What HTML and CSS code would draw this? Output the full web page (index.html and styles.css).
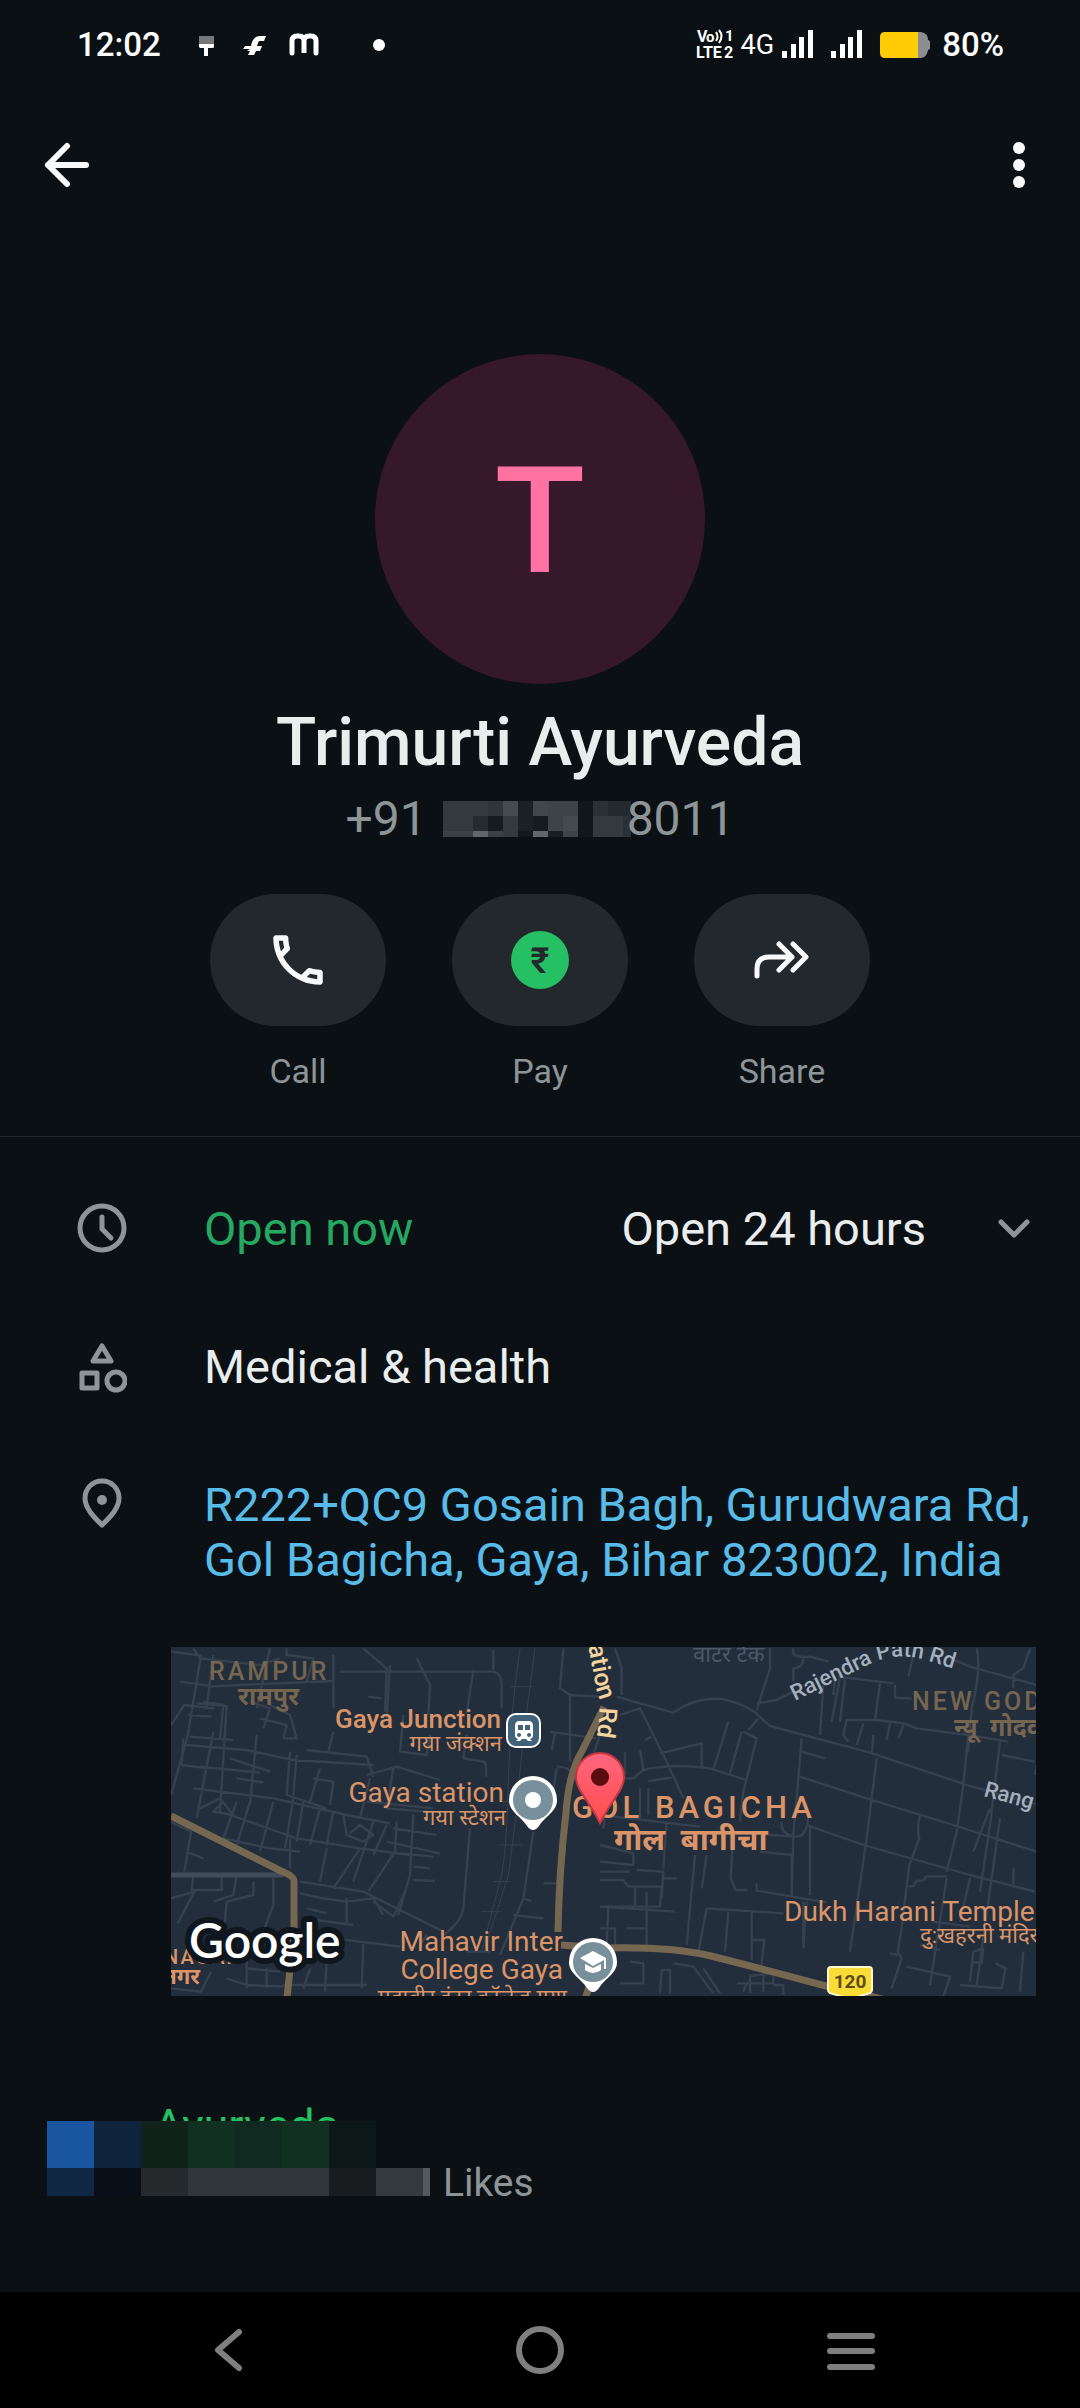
FILE: index.html
```html
<!DOCTYPE html>
<html lang="en">
<head>
<meta charset="utf-8">
<meta name="viewport" content="width=device-width, initial-scale=1">
<title>Trimurti Ayurveda</title>
<link rel="stylesheet" href="styles.css">
</head>
<body>
<div class="statusbar">
  <span class="clock">12:02</span>
  <svg class="notifications" width="188" height="28" viewBox="0 0 188 28" aria-hidden="true">
    <path fill="#75787a" d="M0 5h15v9H0z"/>
    <path fill="#fff" d="M0 13h15v3l-1 1H9v8H5v-8H1l-1-1z"/>
    <path fill="#fff" d="M46 15h6c1-6 4-10 9-10h6l-2 5h-4c-2 0-2 2-3 5h5l-2 5h-4l-2 4h-6l2-4h-3l3-2h-7z"/>
    <path fill="none" stroke="#fff" stroke-width="5" stroke-linecap="round" d="M93 22V10q0-5 5-5h2q5 0 5 5v12V10q0-5 5-5h2q5 0 5 5v12"/>
    <circle cx="180" cy="14" r="6" fill="#fff"/>
  </svg>
  <span class="spacer"></span>
  <svg class="volte" width="38" height="32" viewBox="0 0 38 32" role="img" aria-label="VoLTE">
    <g fill="#fff" font-weight="700">
      <text x="1" y="15" font-size="16">V</text><text x="10" y="15" font-size="15">o</text>
      <text x="29" y="14" font-size="15">1</text>
      <text x="0" y="31" font-size="16">LTE</text><text x="28" y="31" font-size="16">2</text>
    </g>
    <path fill="none" stroke="#fff" stroke-width="2" d="M20 5q3 5 0 9M23 3q5 6 0 13"/>
  </svg>
  <span class="network">4G</span>
  <svg class="signal" width="32" height="28" viewBox="0 0 32 28" aria-hidden="true"><path fill="#fff" d="M0 21h5v7H0zM9 14h5v14H9zM17 7h5v21h-5zM26 0h5v28h-5z"/></svg>
  <svg class="signal" width="32" height="28" viewBox="0 0 32 28" aria-hidden="true"><path fill="#fff" d="M0 21h5v7H0zM9 14h5v14H9zM17 7h5v21h-5zM26 0h5v28h-5z"/></svg>
  <svg class="battery" width="50" height="26" viewBox="0 0 50 26" aria-hidden="true">
    <path fill="#8c8d90" d="M36 0h5q7 1 7 8l2 1v8l-2 1q-1 7-7 8h-5z"/>
    <path fill="#ffcc05" d="M5 0h33v26H5q-5 0-5-5V5q0-5 5-5z"/>
  </svg>
  <span class="charge">80%</span>
</div>

<header class="appbar">
  <button class="icon-button" type="button" aria-label="Back">
    <svg width="50" height="50" viewBox="0 0 50 50" fill="none" stroke="#f7f9fa" stroke-width="6" stroke-linecap="round" stroke-linejoin="round"><path d="M25 6 6 25l19 19M6 25h38"/></svg>
  </button>
  <button class="icon-button" type="button" aria-label="More options">
    <svg width="50" height="50" viewBox="0 0 50 50" fill="#f7f9fa"><circle cx="25" cy="8" r="6"/><circle cx="25" cy="25" r="6"/><circle cx="25" cy="42" r="6"/></svg>
  </button>
</header>

<main>
  <section class="profile">
    <div class="avatar">T</div>
    <h1 class="name">Trimurti Ayurveda</h1>
    <p class="phone">
      <span>+91</span>
      <svg class="phone-mask" width="188" height="36" viewBox="0 0 188 36" shape-rendering="crispEdges" aria-hidden="true">
        <path fill="#33393c" d="M0 0h188v36H0z"/>
        <path fill="#2f363a" d="M45 0h15v15H45z"/><path fill="#454c50" d="M60 0h15v15H60z"/>
        <path fill="#1a2023" d="M75 0h15v30H75z"/><path fill="#40474a" d="M90 0h15v15H90z"/>
        <path fill="#3d4447" d="M105 0h30v36h-30z"/><path fill="#10171a" d="M135 0h15v36h-15z"/>
        <path fill="#2a3033" d="M150 0h15v15h-15z"/><path fill="#23292c" d="M165 0h23v15h-23z"/>
        <path fill="#252c2f" d="M30 15h15v15H30z"/><path fill="#151c1f" d="M45 15h15v15H45zM90 15h15v15H90z"/>
        <path fill="#444b4f" d="M120 15h15v15h-15z"/><path fill="#60676a" d="M30 30h15v6H30zM90 30h15v6H90z"/>
        <path fill="#3a4144" d="M0 30h30v6H0zM45 30h15v6H45z"/><path fill="#11181b" d="M75 30h15v6H75z"/>
        <path fill="#171f22" d="M105 30h15v6h-15z"/><path fill="#2b3134" d="M180 15h8v21h-8z"/>
      </svg>
      <span class="phone-end">8011</span>
    </p>
    <div class="actions">
      <button class="action" type="button">
        <span class="pill"><svg width="66" height="66" viewBox="0 0 24 24" fill="#f7f9fa"><path d="M6.54 5c.06.89.21 1.76.45 2.59l-1.2 1.2c-.41-1.2-.67-2.47-.76-3.79h1.51m9.86 12.02c.85.24 1.72.39 2.6.45v1.49c-1.32-.09-2.59-.35-3.8-.75l1.2-1.19M7.5 3H4c-.55 0-1 .45-1 1 0 9.39 7.61 17 17 17 .55 0 1-.45 1-1v-3.49c0-.55-.45-1-1-1-1.24 0-2.45-.2-3.57-.57-.1-.04-.21-.05-.31-.05-.26 0-.51.1-.71.29l-2.2 2.2c-2.83-1.45-5.15-3.76-6.59-6.59l2.2-2.2c.28-.28.36-.67.25-1.02C8.7 6.45 8.5 5.25 8.5 4c0-.55-.45-1-1-1z"/></svg></span>
        <span>Call</span>
      </button>
      <button class="action" type="button">
        <span class="pill"><svg width="66" height="66" viewBox="0 0 66 66"><circle cx="33" cy="33" r="29" fill="#25c063"/><text x="33" y="46" text-anchor="middle" font-size="36" font-weight="600" fill="#23282c">₹</text></svg></span>
        <span>Pay</span>
      </button>
      <button class="action" type="button">
        <span class="pill"><svg width="66" height="66" viewBox="0 0 66 66" fill="none" stroke="#f7f9fa" stroke-width="5" stroke-linecap="round" stroke-linejoin="round"><path d="M8 49v-7q0-12 12-12h23M30 17l13 13-13 13M44 17l13 13-13 13"/></svg></span>
        <span>Share</span>
      </button>
    </div>
  </section>

  <section class="details">
    <div class="row">
      <svg class="row-icon" width="50" height="55" viewBox="0 0 50 55" fill="none" stroke="#8d9598" stroke-width="5" stroke-linecap="round" stroke-linejoin="round"><circle cx="25" cy="27" r="22"/><path d="M25 16v12l9 9"/></svg>
      <span class="open">Open now</span>
      <button class="hours" type="button" aria-expanded="false">Open 24 hours
        <svg width="44" height="44" viewBox="0 0 44 44" fill="none" stroke="#8d9598" stroke-width="5" stroke-linecap="round" stroke-linejoin="round"><path d="m9 15 13 13 13-13"/></svg>
      </button>
    </div>
    <div class="row">
      <svg class="row-icon" width="50" height="55" viewBox="0 0 50 55" fill="none" stroke="#8d9598" stroke-width="5" stroke-linejoin="round"><path d="M25 7l9 15H16zM5 34h15v15H5z"/><circle cx="39" cy="42" r="9"/></svg>
      <span>Medical &amp; health</span>
    </div>
    <div class="row">
      <svg class="row-icon" width="50" height="55" viewBox="0 0 50 55" fill="none" stroke="#8d9598" stroke-width="5" stroke-linejoin="round"><path d="M25 4c10 0 17 8 17 17 0 11-10 20-17 27C18 41 8 32 8 21 8 12 15 4 25 4z"/><circle cx="25" cy="23" r="5" fill="#8d9598" stroke="none"/></svg>
      <a class="address" href="#map">R222+QC9 Gosain Bagh, Gurudwara Rd,<br>Gol Bagicha, Gaya, Bihar 823002, India</a>
    </div>
  </section>

  <a class="map" id="map" href="#map" aria-label="Map of Gol Bagicha">
  <svg viewBox="0 0 865 349">
    <defs>
      <linearGradient id="pin" x1="0" y1="0" x2="0" y2="1"><stop offset="0" stop-color="#ff6680"/><stop offset="1" stop-color="#ff4d4d"/></linearGradient>
      <path id="station-rd" d="M413-24 426 45Q432 58 424 100"/>
      <path id="rajendra-rd" d="M624 54 697 18Q722 5 751 12L790 24"/>
    </defs>
    <path fill="#232e3c" d="M0 0h865v349H0z"/>
    <!-- western side streets -->
    <g transform="translate(-11 -12) scale(.333333)" fill="none" stroke="#36414f" stroke-width="7" stroke-linejoin="round">
      <path d="M33 50l90 12-40 240-50 180M100 40l20 30 180 20 60-20M160 60l-20 160M330 40l-40 180M60 140l100 14 120-6 240-10M380 40v20l80 10-20 70M33 270l40-60 90 10M90 305l130 10M70 310l-5 80 80 10M130 200l60 10-10 100M110 205l90 8M85 240l70 5M160 290l-50 260M80 330l180 15 140 30 240 15M200 210l-20 320M270 200l60 20-20 60M300 250l80 20-10 40M330 210l60 30 20 70h-40M120 395l180 18M210 370l120 40M230 430l80 12M290 300l-20 210M390 350l-10 130 120 40M410 360l-10 120M440 345l180 20 20 60M520 290l-15 60M480 400l-30 100M460 430l60 10-10 70M100 460l240 30 220 50 130 25M120 520l60-30 40 50-60-10 30-30M230 500l-40 110M270 500l-40 130M340 500l-40 150M400 490l-25 150M430 500l-20 120M480 520l-30 110M520 530l-20 100M550 540l10 60 50 20 30-20-40-30-30 25M210 540l200 70 190 30 150 20M190 610l140 30 90 10M390 610v90M500 640l-20 100M600 640l-80 120M640 560l-60 180M680 570l-40 90M710 560l-5 90-80 120M760 540l-10 180-35 120M620 420l90-25 130 40M630 430l-30 120M700 400l-20 120 120 10M620 500l200 20M700 580l130 20M680 620l160 35M720 655l100 10M760 695l50 5M760 735l65 3M33 720h370M100 720l-5 45h90v-45M33 560l60 30-20 120M80 650l50 20M230 720l-10 60-60 20M340 730v80l-30 80M280 740v40l-80 20-10 110M420 740l190 30 240 120M420 775l70 15 70 10 80-10 30 50M440 820l60 15M430 850l150 20M560 790v80M640 800l60 45 35-75M33 790l70-20-50 95M33 1060l90 10 30-60M260 880v180M200 1030l60 20 110 5M450 1000l-20 60M500 980l-5 90M610 920l-5 140M520 910l200 25M320 1000v60M370 1050h250M260 1000l100 10"/>
      <path d="M520 60v160M540 110h460q25 5 25 40v70M610 40l70 60-5 130M690 90l-10 160M770 70l40 80-5 90M940 105l-20 130M1000 45v60M625 185l40 5M730 240l-10 110 80 10 10-60M920 300l-10 70 60 10q10 0 8 45M930 580l-20 240q-5 40-60 80M1120 590l-30 200-70 170M1150 745h45M1090 790l25 8M1210 40l-10 120 30 20 90 5M1230 180v200M1170 290l140 20M1185 295l-10 50M1190 400l-20 130M1190 395q50 0 50 40M1320 300l-40 120M1060 840l90 10M920 950h70M800 900l-20 30"/>
      <path stroke-width="3" d="M1080 40q-30 200-35 400t-20 280l-60 230M1125 40q-40 300-50 420t-30 260l-70 220M1050 155h70M1045 255h70M1020 500h70M1020 630h70M1000 740h50M965 830h60"/>
    </g>
    <!-- eastern side streets -->
    <g transform="translate(429 -12) scale(.333333)" fill="none" stroke="#36414f" stroke-width="7" stroke-linejoin="round">
      <path d="M50 185l70 20 100 28q70-50 150-40 50 10 90 35l50 45 300 80 300 100 200 55M510 40v60l-40 125M470 205l60-10 50-25M45 40l20 60v80M580 40q-10 30 50 25l55 15M610 70q0 30-30 30v40M940 60l-15 65M1050 70l60 25 200 55M1130 40q15 60-15 180l-10 130M1290 40l-20 60-30 20v40M60 240l60-20 80 160 50 110M135 315l20-10M180 355l125-30v75M120 345l10 60-30 25H70M130 405q80-20 200-5l110 35M145 438l70-10M385 260l-45 145M425 290l-35 125M430 290l40 20-40 160-10 90M445 285l30-35M605 310l-10 120-15 170-5 180M605 350l70 20M600 425l200 65 260 80 250 80M830 370l-30 240-50 340M820 300l-5 60M960 540q-10 40-2 70l-30 80-25 200-10 60 12 20-30 90M620 570l170 60 320 90 195 50M630 570v210M545 560q-5 40 45 45 30 0 35-60M580 605l-130-10M480 650l95 10v120M400 590l-8 140 15 35h35M470 745v22l210 35M1090 450l-20 140-30 120M1105 300l-15 150M1200 320l-30 250-30 200M1170 520l-50 130M1205 360l100 20M1200 550l-70 500M920 755l20-2 10-15 20-2 10-12h60M1040 730l-50 320M1240 700v60M1110 730l-30 130M1310 390l-5 30M720 130l-25 130M715 125l165 20M700 180l5-50M735 130l-15 130M840 145l-15 110M885 150v38l50 3M830 255h-90l-10 45 15 20M790 265l-20 65M870 265l-10 50M910 270l-15 40M830 255l80 10 40 15 155 20 120 20M670 150l-10 150"/>
      <path d="M0 630l100 25v35l-100-10M0 710h90M0 735h70l15 20h100l-5 60H0M110 705l80 5-5 80M190 730h40M105 760v50M140 770v180M0 815l225 15M25 820l-5 110M0 880h45v50M80 880h55M285 660l-25 270M320 660l-15 100M320 820l230 15M320 820l-25 130M385 830l-10 120M455 830v85h38l-10 90M455 915v60M610 800v140M620 800l-10 140M200 560l-10 140M20 460l-10 120M75 350v70M120 460v90M145 460v80M0 540l300 35M90 980l40 5v60H60M220 985l60 10 60 80M310 1000l50 75M180 1075l5-70h25v70M410 1045h110v-30l-70 8v50M490 1010v60M440 1045l-10 25M520 1050h30v30M920 995l130 30-20 60M1080 1050l125 10 12-60-30-15M1110 1040l10-90 30-10-5 45-30-5M870 955l25 5M960 930l60 15M1000 860l110 15M1270 950l-10 120"/>
    </g>
    <g fill="none" stroke="#766850" stroke-width="7" stroke-linejoin="round">
      <path stroke="#414c59" stroke-width="5" d="M0 228h112"/>
      <path d="M0 169l110 55q13 5 13 10v50l-7 67M433 60 411 104Q398 125 395 165q-7 60-8 120M390 298l40 3q70-2 110 8t115 30q40 8 80 20M418 340l-4 12"/>
    </g>
    <g class="map-area" fill="#766650">
      <text x="38" y="33">RAMPUR</text><text x="741" y="63">NEW GOD</text>
    </g>
    <g class="map-area-hindi" fill="#766650">
      <text x="67" y="58">रामपुर</text><text x="783" y="89">न्यू&#160; गोदव</text>
    </g>
    <text class="map-hindi" x="522" y="15" fill="#4d5866">वॉटर टैंक</text>
    <g fill="#db9468">
      <text class="map-place map-medium" x="330" y="81" text-anchor="end">Gaya Junction</text>
      <text class="map-hindi" x="331" y="104" text-anchor="end">गया जंक्शन</text>
      <text class="map-place" x="333" y="155" text-anchor="end">Gaya station</text>
      <text class="map-hindi" x="335" y="178" text-anchor="end">गया स्टेशन</text>
      <text class="map-district" x="401" y="171">GOL BAGICHA</text>
      <text class="map-district-hindi" x="443" y="203">गोल&#160; बागीचा</text>
      <text class="map-place" x="392" y="304" text-anchor="end">Mahavir Inter</text>
      <text class="map-place" x="392" y="332" text-anchor="end">College Gaya</text>
      <text class="map-hindi" x="396" y="358" text-anchor="end">महावीर इंटर कॉलेज गया</text>
      <text class="map-place" x="613" y="274">Dukh Harani Temple</text>
      <text class="map-hindi" x="749" y="296">दु:खहरनी मंदिर</text>
      <text class="map-town" x="70" y="317" text-anchor="end">NAGAR</text>
      <text class="map-hindi map-bold" x="29" y="337" text-anchor="end">नगर</text>
    </g>
    <text class="map-road map-station" fill="#f5d39c"><textPath href="#station-rd">Station Rd</textPath></text>
    <g class="map-road" fill="#a4b0bd">
      <text><textPath href="#rajendra-rd">Rajendra Path Rd</textPath></text>
      <text x="812" y="149" transform="rotate(15 812 149)">Rang</text>
    </g>
    <rect x="336" y="67" width="33" height="33" rx="9" fill="#42617a" stroke="#fff" stroke-width="2"/>
    <path fill="#fff" fill-rule="evenodd" d="M347 74h12q3 1 3 5v10q0 2-3 3l2 2h-4l-2-2h-4l-2 2h-4l2-2q-3-1-3-3V79q0-4 3-5zm0 4v5h5v-5zm7 0v5h5v-5zm-6 8a2 2 0 1 0 .1 0zm10 0a2 2 0 1 0 .1 0z"/>
    <path fill="#fff" d="M362 129a24 24 0 0 1 24 24c0 12-12 16-18 26q-6 8-12 0c-6-10-18-14-18-26a24 24 0 0 1 24-24z"/>
    <circle cx="362" cy="153" r="20" fill="#78909c"/><circle cx="362" cy="153" r="8" fill="#fff"/>
    <path fill="#fff" d="M422 291a24 24 0 0 1 24 24c0 12-12 16-18 26q-6 8-12 0c-6-10-18-14-18-26a24 24 0 0 1 24-24z"/>
    <circle cx="422" cy="315" r="20" fill="#78909c"/>
    <path fill="#fff" d="M409 311l13-7 13 7v11h-2v-9l-11 6zM414 317l8 4 8-4v6q-8 6-16 0z"/>
    <path fill="url(#pin)" stroke="#c4373f" stroke-width="2" d="M429 106a24 24 0 0 1 24 24c0 13-12 22-24 46-12-24-24-33-24-46a24 24 0 0 1 24-24z"/>
    <circle cx="429" cy="130" r="9" fill="#590d10"/>
    <path fill="#fbdb35" stroke="#fff6cf" stroke-width="2" d="M660 320h38q3 0 3 3v20q0 2-2 3l-20 6-20-6q-2-1-2-3v-20q0-3 3-3z"/>
    <text x="679" y="341" text-anchor="middle" class="map-shield" fill="#5c4b1b">120</text>
    <text x="18" y="311" class="map-logo">Google</text>
  </svg>
  </a>

  <section class="listing">
    <a class="listing-title" href="#map">Ayurveda</a>
    <p class="listing-meta">Likes</p>
    <svg class="listing-mask" width="383" height="75" viewBox="0 0 383 75" shape-rendering="crispEdges" aria-hidden="true">
      <path fill="#1a56a0" d="M0 0h47v47H0z"/><path fill="#10233d" d="M47 0h47v47H47z"/>
      <path fill="#10231b" d="M94 0h47v47H94z"/><path fill="#123022" d="M141 0h47v47h-47zM235 0h47v47h-47z"/>
      <path fill="#112a21" d="M188 0h47v47h-47z"/><path fill="#0c1818" d="M282 0h47v47h-47z"/>
      <path fill="#102844" d="M0 47h47v28H0z"/><path fill="#091017" d="M47 47h47v28H47z"/>
      <path fill="#262a2d" d="M94 47h47v28H94z"/><path fill="#31363a" d="M141 47h141v28H141z"/>
      <path fill="#191d20" d="M282 47h47v28h-47z"/><path fill="#33393d" d="M329 47h47v28h-47z"/>
      <path fill="#52585b" d="M376 47h7v28h-7z"/>
    </svg>
  </section>
</main>

<nav class="navbar" aria-label="System">
  <button type="button" aria-label="Back"><svg width="60" height="60" viewBox="0 0 60 60"><path d="M41 12 20 30l21 18"/></svg></button>
  <button type="button" aria-label="Home"><svg width="60" height="60" viewBox="0 0 60 60"><circle cx="30" cy="30" r="21"/></svg></button>
  <button type="button" aria-label="Recent apps"><svg width="60" height="60" viewBox="0 0 60 60"><path d="M8 16h42M8 31h42M8 47h42"/></svg></button>
</nav>
</body>
</html>
```
FILE: styles.css
```css
* {
  box-sizing: border-box;
}

body {
  margin: 0;
  min-height: 100vh;
  display: flex;
  flex-direction: column;
  background: #0b1014;
  color: #e9edee;
  font-family: Roboto, "Noto Sans", sans-serif;
}

h1,
p {
  margin: 0;
}

button {
  padding: 0;
  border: 0;
  background: none;
  color: inherit;
  font: inherit;
  cursor: pointer;
}

a {
  text-decoration: none;
}

svg {
  display: block;
  flex: none;
}

/* Status bar */
.statusbar {
  display: flex;
  align-items: center;
  height: 90px;
  padding: 0 76px 0 77px;
  color: #fff;
  font-size: 33px;
  font-weight: 500;
  line-height: 40px;
}

.notifications {
  margin-left: 38px;
}

.spacer {
  flex: 1;
}

.volte {
  margin-top: -4px;
}

.network {
  margin: 0 8px 0 7px;
  font-size: 27px;
  font-weight: 400;
}

.signal {
  margin: -2px 17px 0 0;
}

.battery {
  margin-right: 12px;
}

/* App bar */
.appbar {
  display: flex;
  align-items: center;
  justify-content: space-between;
  height: 150px;
  padding: 0 36px 0 42px;
}

/* Profile */
.profile {
  display: flex;
  flex-direction: column;
  align-items: center;
  padding: 114px 0 45px;
  border-bottom: 1px solid #20272b;
}

.avatar {
  display: grid;
  place-items: center;
  width: 330px;
  height: 330px;
  padding-top: 4px;
  border-radius: 50%;
  background: #35192a;
  color: #ff72a1;
  font-size: 149px;
  font-weight: 500;
  line-height: 1;
}

.name {
  margin-top: 20px;
  font-size: 66px;
  font-weight: 500;
  line-height: 78px;
}

.phone {
  display: flex;
  align-items: center;
  margin-top: 8px;
  color: #8d9598;
  font-size: 48px;
  line-height: 58px;
}

.phone-mask {
  margin: 0 -4px 0 16px;
}

.actions {
  display: flex;
  gap: 66px;
  margin-top: 46px;
}

.action {
  display: flex;
  flex-direction: column;
  gap: 25px;
  align-items: center;
  color: #8d9598;
  font-size: 34px;
  line-height: 40px;
}

.pill {
  display: grid;
  place-items: center;
  width: 176px;
  height: 132px;
  border-radius: 66px;
  background: #23282c;
}

/* Details */
.details {
  display: flex;
  flex-direction: column;
  gap: 83px;
  padding: 64px 44px 60px 77px;
  font-size: 47px;
  line-height: 55px;
}

.row {
  display: flex;
  align-items: flex-start;
}

.row-icon {
  margin-right: 77px;
}

.open {
  color: #27a862;
}

.hours {
  display: flex;
  align-items: center;
  gap: 66px;
  margin-left: auto;
}

.address {
  color: #58bbe8;
  white-space: nowrap;
}

/* Map */
.map {
  display: block;
  margin: 0 44px 0 171px;
}

.map svg {
  width: 100%;
  height: auto;
  overflow: hidden;
}

.map-area {
  font-size: 25px;
  font-weight: 500;
  letter-spacing: 3px;
}

.map-area-hindi {
  font-size: 25px;
  font-weight: 700;
}

.map-place {
  font-size: 28px;
}

.map-medium {
  font-size: 26px;
  font-weight: 500;
}

.map-hindi {
  font-size: 22px;
}

.map-bold {
  font-weight: 700;
}

.map-district {
  font-size: 31px;
  font-weight: 500;
  letter-spacing: 4px;
}

.map-district-hindi {
  font-size: 31px;
  font-weight: 700;
}

.map-town {
  font-size: 20px;
  font-weight: 500;
  letter-spacing: 2px;
}

.map-road {
  font-size: 22px;
  font-weight: 500;
}

.map-station {
  font-size: 25px;
}

.map-shield {
  font-size: 19px;
  font-weight: 700;
}

.map-logo {
  fill: #fff;
  stroke: #10161d;
  stroke-width: 12px;
  stroke-linejoin: round;
  paint-order: stroke;
  font-family: Lato, sans-serif;
  font-size: 48px;
  font-weight: 600;
}

/* Listing */
.listing {
  position: relative;
  padding: 106px 44px 60px 154px;
}

.listing-title {
  display: block;
  color: #25c063;
  font-size: 45px;
  line-height: 48px;
}

.listing-meta {
  margin-top: 10px;
  padding-left: 289px;
  color: #8d9598;
  font-size: 39px;
  line-height: 46px;
}

.listing-mask {
  position: absolute;
  left: 47px;
  top: 125px;
}

/* System navigation */
.navbar {
  display: grid;
  grid-template-columns: repeat(3, 1fr);
  align-items: center;
  height: 116px;
  margin-top: auto;
  padding: 0 72px;
  background: #000;
}

.navbar button {
  justify-self: center;
}

.navbar svg {
  fill: none;
  stroke: #7f7f7f;
  stroke-width: 6px;
  stroke-linecap: round;
  stroke-linejoin: round;
}
```
